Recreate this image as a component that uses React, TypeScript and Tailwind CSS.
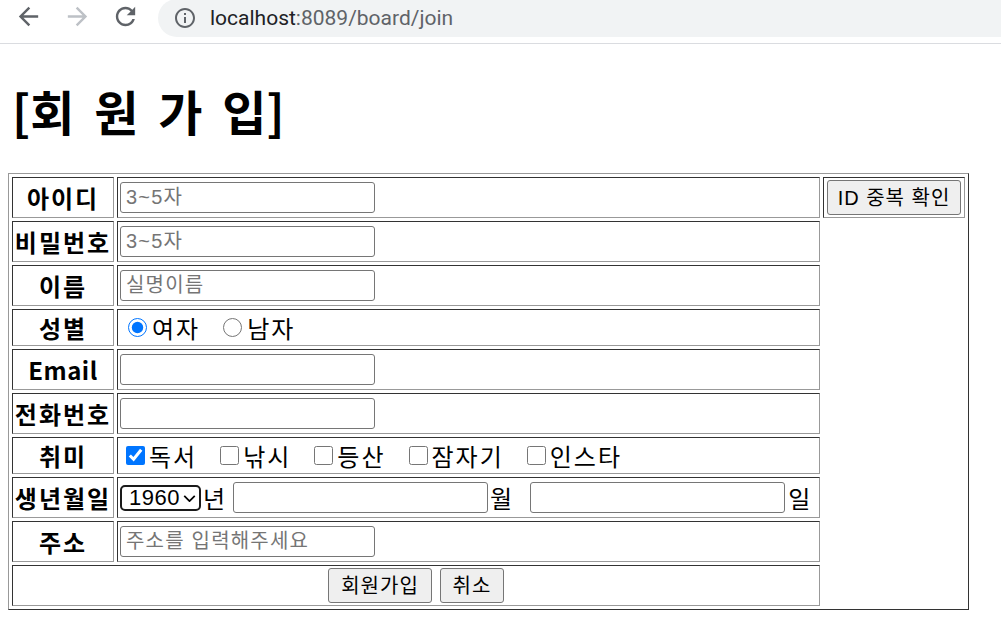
import React from "react";

const kr = "font-['Noto_Sans_CJK_KR',sans-serif]";
const ctl = "font-['Liberation_Sans','Noto_Sans_CJK_KR',sans-serif]";

const cell =
  "border border-solid border-t-[#333] border-l-[#333] border-r-[#999] border-b-[#999] p-0 align-middle";

const btn = `${ctl} h-[35px] rounded-[3px] border border-[#767676] bg-[#efefef] text-[20px] leading-none tracking-[1px]`;

const hobbies = [
  { name: "독서", checked: true },
  { name: "낚시", checked: false },
  { name: "등산", checked: false },
  { name: "잠자기", checked: false },
  { name: "인스타", checked: false },
];

function TextInput({ placeholder, type = "text" }: { placeholder?: string; type?: string }) {
  return (
    <input
      type={type}
      placeholder={placeholder}
      className={`${ctl} h-[31px] w-[255px] rounded-[3px] border border-[#767676] bg-white px-[5px] text-[20px] text-black placeholder:tracking-[1.2px] placeholder:text-[#757575]`}
    />
  );
}

function Label({ children, latin = false }: { children: React.ReactNode; latin?: boolean }) {
  return (
    <td
      className={`${cell} text-center text-[24px] font-bold leading-[30px] ${latin ? "tracking-[0.5px]" : "tracking-[2px]"}`}
    >
      {children}
    </td>
  );
}

function BrowserBar() {
  return (
    <div className="flex h-[44px] items-start border-b border-[#dadce0] bg-white">
      <svg viewBox="0 0 24 24" className="ml-[14px] mt-[2px] h-[29px] w-[29px] fill-[#5f6368]">
        <path d="M20 11H7.83l5.59-5.59L12 4l-8 8 8 8 1.41-1.41L7.83 13H20v-2z" />
      </svg>
      <svg viewBox="0 0 24 24" className="ml-[20px] mt-[2px] h-[29px] w-[29px] fill-[#bdc1c6]">
        <path d="M12 4l-1.41 1.41L16.17 11H4v2h12.17l-5.58 5.59L12 20l8-8z" />
      </svg>
      <svg viewBox="0 0 24 24" className="ml-[19px] mt-[2px] h-[29px] w-[29px] fill-[#5f6368]">
        <path d="M17.65 6.35C16.2 4.9 14.21 4 12 4c-4.42 0-7.99 3.58-7.99 8s3.57 8 7.99 8c3.73 0 6.84-2.55 7.73-6h-2.08c-.82 2.33-3.04 4-5.65 4-3.31 0-6-2.69-6-6s2.69-6 6-6c1.66 0 3.14.69 4.22 1.78L13 11h7V4l-2.35 2.35z" />
      </svg>
      <div className="-mt-px ml-[18px] flex h-[38px] flex-1 items-center rounded-l-[19px] bg-[#f1f3f4]">
        <svg viewBox="0 0 24 24" className="ml-[15px] h-[24px] w-[24px] fill-[#5f6368]">
          <path d="M11 7h2v2h-2zm0 4h2v6h-2zm1-9C6.48 2 2 6.48 2 12s4.48 10 10 10 10-4.48 10-10S17.52 2 12 2zm0 18c-4.41 0-8-3.59-8-8s3.59-8 8-8 8 3.59 8 8-3.59 8-8 8z" />
        </svg>
        <span className="ml-[13px] font-['Roboto',sans-serif] text-[21px] leading-none">
          <span className="text-[#202124]">localhost</span>
          <span className="text-[#5f6368]">:8089/board/join</span>
        </span>
      </div>
    </div>
  );
}

export default function App() {
  return (
    <div className={`${kr} min-h-[639px] bg-white text-black`}>
      <BrowserBar />

      <h1 className="ml-3 mt-[34px] h-[64px] text-[48px] font-bold leading-[64px] [word-spacing:9px]">
        [회 원 가 입]
      </h1>

      <table className="ml-2 mt-[31px] w-[961px] table-fixed border-separate border-spacing-[3px] border border-solid border-t-[#999] border-l-[#999] border-r-[#333] border-b-[#333]">
        <tbody>
          <tr className="h-[41px]">
            <Label>아이디</Label>
            <td className={`${cell} w-[703px] pl-[2px]`}>
              <TextInput placeholder="3~5자" />
            </td>
            <td className={`${cell} w-[142px] text-center`}>
              <button className={`${btn} w-[134px]`}>ID 중복 확인</button>
            </td>
          </tr>
          <tr className="h-[41px]">
            <Label>비밀번호</Label>
            <td className={`${cell} pl-[2px]`}>
              <TextInput type="password" placeholder="3~5자" />
            </td>
          </tr>
          <tr className="h-[41px]">
            <Label>이름</Label>
            <td className={`${cell} pl-[2px]`}>
              <TextInput placeholder="실명이름" />
            </td>
          </tr>
          <tr className="h-[37px]">
            <Label>성별</Label>
            <td className={`${cell} pl-[2px]`}>
              <div className="flex items-center text-[24px] leading-[30px] tracking-[2px]">
                <input type="radio" name="gender" defaultChecked className="ml-[8px] h-[19px] w-[19px] accent-[#0075ff]" />
                <span className="ml-[5px]">여자</span>
                <input type="radio" name="gender" className="ml-[23px] h-[19px] w-[19px] accent-[#0075ff]" />
                <span className="ml-[5px]">남자</span>
              </div>
            </td>
          </tr>
          <tr className="h-[41px]">
            <Label latin>Email</Label>
            <td className={`${cell} pl-[2px]`}>
              <TextInput />
            </td>
          </tr>
          <tr className="h-[41px]">
            <Label>전화번호</Label>
            <td className={`${cell} pl-[2px]`}>
              <TextInput />
            </td>
          </tr>
          <tr className="h-[37px]">
            <Label>취미</Label>
            <td className={`${cell} pl-[2px]`}>
              <div className="flex items-center text-[24px] leading-[30px] tracking-[2px]">
                {hobbies.map((h, i) => (
                  <React.Fragment key={h.name}>
                    <input
                      type="checkbox"
                      defaultChecked={h.checked}
                      className={`${i === 0 ? "ml-[6px]" : "ml-[23px]"} h-[19px] w-[19px] accent-[#0075ff]`}
                    />
                    <span className="ml-[4px]">{h.name}</span>
                  </React.Fragment>
                ))}
              </div>
            </td>
          </tr>
          <tr className="h-[41px]">
            <Label>생년월일</Label>
            <td className={`${cell} pl-[2px]`}>
              <div className="flex items-center text-[24px] leading-[30px]">
                <div className="relative flex">
                  <select
                    defaultValue="1960"
                    className={`${ctl} h-[26px] w-[81px] appearance-none rounded-[5px] border-2 border-[#1a1a1a] bg-white pl-[7px] text-[22px] leading-none tracking-[0.5px]`}
                  >
                    {Array.from({ length: 61 }, (_, k) => 1960 + k).map((y) => (
                      <option key={y} value={y}>
                        {y}
                      </option>
                    ))}
                  </select>
                  <svg
                    viewBox="0 0 14 8"
                    className="pointer-events-none absolute right-[5px] top-[10px] h-[7px] w-[13px] fill-none stroke-black stroke-[2]"
                  >
                    <path d="M1 1l6 6 6-6" />
                  </svg>
                </div>
                <span className="ml-[2px]">년</span>
                <span className="ml-[8px] flex">
                  <TextInput />
                </span>
                <span className="ml-[2px]">월</span>
                <span className="ml-[18px] flex">
                  <TextInput />
                </span>
                <span className="ml-[3px]">일</span>
              </div>
            </td>
          </tr>
          <tr className="h-[41px]">
            <Label>주소</Label>
            <td className={`${cell} pl-[2px]`}>
              <TextInput placeholder="주소를 입력해주세요" />
            </td>
          </tr>
          <tr className="h-[41px]">
            <td colSpan={2} className={`${cell} text-center`}>
              <div className="flex justify-center gap-[8px]">
                <button className={`${btn} w-[104px]`}>회원가입</button>
                <button className={`${btn} w-[64px]`}>취소</button>
              </div>
            </td>
          </tr>
        </tbody>
      </table>
    </div>
  );
}
